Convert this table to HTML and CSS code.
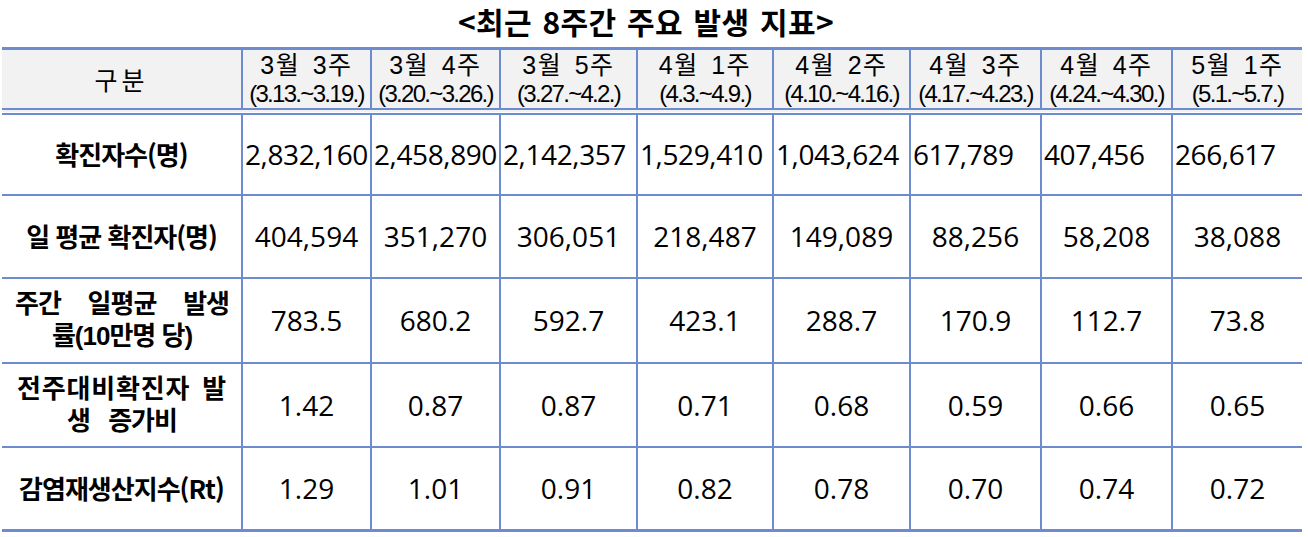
FILE: index.html
```html
<!DOCTYPE html>
<html lang="ko">

<head>
    <meta charset="UTF-8">
    <meta name="viewport" content="width=device-width, initial-scale=1.0">
    <title>최근 8주간 주요 발생 지표</title>
    <link rel="stylesheet" href="styles.css">
</head>

<body>
    <div class="page">
        <h1 class="title">&lt;최근 8주간 주요 발생 지표&gt;</h1>
        <table class="stats">
            <colgroup>
                <col class="c-label">
                <col class="c-129">
                <col class="c-129">
                <col class="c-137">
                <col class="c-136">
                <col class="c-137">
                <col class="c-131">
                <col class="c-131">
                <col class="c-130">
            </colgroup>
            <thead>
                <tr class="head-row">
                    <th class="corner">구분</th>
                    <th><span class="wk">3월 3주</span><span class="dt">(3.13.~3.19.)</span></th>
                    <th><span class="wk">3월 4주</span><span class="dt">(3.20.~3.26.)</span></th>
                    <th><span class="wk">3월 5주</span><span class="dt">(3.27.~4.2.)</span></th>
                    <th><span class="wk">4월 1주</span><span class="dt">(4.3.~4.9.)</span></th>
                    <th><span class="wk">4월 2주</span><span class="dt">(4.10.~4.16.)</span></th>
                    <th><span class="wk">4월 3주</span><span class="dt">(4.17.~4.23.)</span></th>
                    <th><span class="wk">4월 4주</span><span class="dt">(4.24.~4.30.)</span></th>
                    <th><span class="wk">5월 1주</span><span class="dt">(5.1.~5.7.)</span></th>
                </tr>
            </thead>
            <tbody>
                <tr class="row-1 total">
                    <th>확진자수(명)</th>
                    <td>2,832,160</td>
                    <td>2,458,890</td>
                    <td>2,142,357</td>
                    <td>1,529,410</td>
                    <td>1,043,624</td>
                    <td>617,789</td>
                    <td>407,456</td>
                    <td>266,617</td>
                </tr>
                <tr class="row-2">
                    <th>일 평균 확진자(명)</th>
                    <td>404,594</td>
                    <td>351,270</td>
                    <td>306,051</td>
                    <td>218,487</td>
                    <td>149,089</td>
                    <td>88,256</td>
                    <td>58,208</td>
                    <td>38,088</td>
                </tr>
                <tr class="row-3">
                    <th class="multi"><span class="just">주간 일평균 발생</span><span>률(10만명 당)</span></th>
                    <td>783.5</td>
                    <td>680.2</td>
                    <td>592.7</td>
                    <td>423.1</td>
                    <td>288.7</td>
                    <td>170.9</td>
                    <td>112.7</td>
                    <td>73.8</td>
                </tr>
                <tr class="row-4">
                    <th class="multi"><span class="loose">전주대비확진자 발</span><span class="wide">생 증가비</span></th>
                    <td>1.42</td>
                    <td>0.87</td>
                    <td>0.87</td>
                    <td>0.71</td>
                    <td>0.68</td>
                    <td>0.59</td>
                    <td>0.66</td>
                    <td>0.65</td>
                </tr>
                <tr class="row-5">
                    <th>감염재생산지수(Rt)</th>
                    <td>1.29</td>
                    <td>1.01</td>
                    <td>0.91</td>
                    <td>0.82</td>
                    <td>0.78</td>
                    <td>0.70</td>
                    <td>0.74</td>
                    <td>0.72</td>
                </tr>
            </tbody>
        </table>
    </div>
</body>

</html>
```

FILE: styles.css
```css
* {
    margin: 0;
    padding: 0;
    box-sizing: border-box;
}

:root {
    --line: #6d8bcf;
}

body {
    background: #fff;
    color: #000;
    font-family: "Noto Sans CJK KR", sans-serif;
}

.page {
    width: 1308px;
    height: 537px;
    overflow: hidden;
}

.title {
    height: 47px;
    padding: 0 16px 0 0;
    text-align: center;
    font-size: 30px;
    font-weight: 700;
    line-height: 42px;
    letter-spacing: 0.3px;
    word-spacing: 2px;
}

.stats {
    width: 1300px;
    margin-left: 2px;
    border-collapse: collapse;
    table-layout: fixed;
}

.c-label { width: 240px; }
.c-129 { width: 129px; }
.c-130 { width: 130px; }
.c-131 { width: 131px; }
.c-136 { width: 136px; }
.c-137 { width: 137px; }

.stats th,
.stats td {
    border: 2px solid var(--line);
    text-align: center;
    vertical-align: middle;
    white-space: nowrap;
}

.stats tr > :first-child {
    border-left: none;
}

.stats tr > :last-child {
    border-right: none;
}

/* header */
.head-row {
    height: 63px;
}

.head-row th {
    background: #f2f2f2;
    border-top: 3px solid var(--line);
    border-bottom: 7px double var(--line);
    font-weight: 400;
}

.corner {
    font-size: 25px;
    letter-spacing: 4px;
}

.wk,
.dt {
    display: block;
    font-family: "Liberation Sans", "Noto Sans CJK KR", sans-serif;
}

.wk {
    font-size: 25px;
    line-height: 30px;
    letter-spacing: 1.5px;
    word-spacing: 4px;
}

.dt {
    font-size: 24px;
    line-height: 28px;
    letter-spacing: -1.7px;
}

/* body */
.stats tbody th {
    font-size: 26px;
    font-weight: 700;
    letter-spacing: -1px;
    line-height: 32px;
}

.stats tbody td {
    font-family: "Open Sans", "Noto Sans CJK KR", sans-serif;
    font-size: 28px;
}

.total td {
    text-align: left;
    padding-left: 2px;
    letter-spacing: -0.4px;
}

.row-1 { height: 83px; }
.row-2 { height: 83px; }
.row-3 { height: 85px; }
.row-4 { height: 84px; }
.row-5 { height: 84px; }

.row-5 th,
.row-5 td {
    border-bottom: 3px solid var(--line);
}

.multi {
    padding: 0 12px 0 13px;
}

.multi span {
    display: block;
    font-family: "Liberation Sans", "Noto Sans CJK KR", sans-serif;
}

.just {
    text-align: justify;
    text-align-last: justify;
}

.stats tbody .loose {
    letter-spacing: 0.8px;
    word-spacing: 4px;
}

.wide {
    word-spacing: 12px;
}
```
